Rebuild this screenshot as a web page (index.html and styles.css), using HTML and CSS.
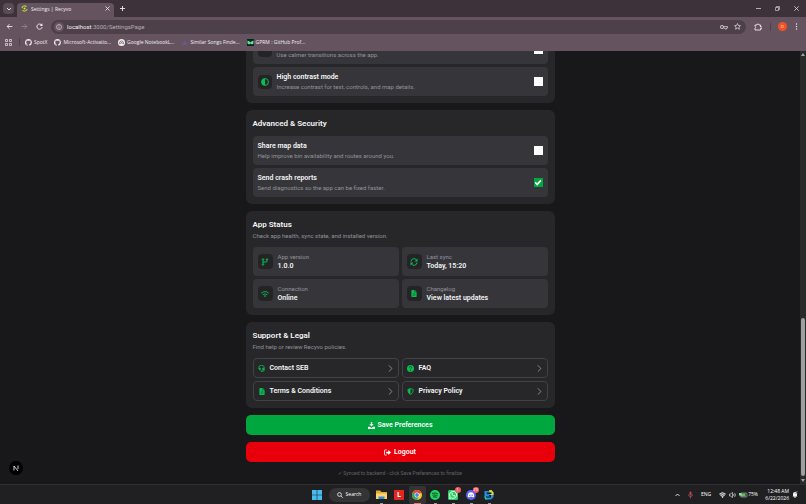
FILE: index.html
```html
<!DOCTYPE html>
<html lang="en">
<head>
    <meta charset="UTF-8">
    <meta name="viewport" content="width=device-width, initial-scale=1.0">
    <title>Settings | Recyvo</title>
    <link rel="stylesheet" href="styles.css">
</head>
<body>
    <!-- shared icons -->
    <svg class="sprite" aria-hidden="true">
        <symbol id="github" viewBox="0 0 16 16"><path d="M8 0a8 8 0 0 0-2.5 15.6c.4.1.5-.2.5-.4v-1.500c-2.200.5-2.700-1-2.700-1-.4-.9-.9-1.200-.9-1.200-.7-.5.1-.5.1-.5.8.1 1.200.8 1.200.8.7 1.300 1.900.9 2.300.7.1-.5.3-.9.5-1.100-1.800-.2-3.600-.9-3.600-4 0-.9.300-1.600.8-2.100-.1-.2-.4-1 .1-2.100 0 0 .7-.2 2.200.8a7.500 7.500 0 0 1 4 0c1.500-1 2.200-.8 2.200-.8.5 1.100.2 1.900.1 2.100.5.600.8 1.300.8 2.100 0 3.100-1.900 3.800-3.700 4 .3.300.6.8.6 1.500v2.200c0 .2.100.5.5.4A8 8 0 0 0 8 0z" fill="#f1ebef"/></symbol>
        <symbol id="chevron" viewBox="0 0 8 12"><path d="M1.500 1l5 5-5 5" fill="none" stroke="currentColor" stroke-width="1.500" stroke-linecap="round" stroke-linejoin="round"/></symbol>
        <symbol id="file" viewBox="0 0 12 16"><path d="M2 0h5v5h5v9a2 2 0 0 1-2 2H2a2 2 0 0 1-2-2V2a2 2 0 0 1 2-2zm6 0l4 4H8z" fill="currentColor"/><path d="M3 9h6M3 12h6" stroke="#1f3427" stroke-width="1"/></symbol>
    </svg>

    <header class="browser">
        <div class="tab-strip">
            <button class="tab-search" aria-label="Search tabs">
                <svg width="6" height="4" viewBox="0 0 6 4"><path d="M1 1l2 2 2-2" fill="none" stroke="#e8dfe5"/></svg>
            </button>
            <div class="tab">
                <svg width="7" height="7" viewBox="0 0 14 14"><path d="M2 6a5 5 0 0 1 9-2M12 8a5 5 0 0 1-9 2" fill="none" stroke="#b4cc2e" stroke-width="2.500"/><circle cx="7" cy="7" r="2" fill="#dfe04c"/><path d="M0 7h4M10 7h4" stroke="#48751f" stroke-width="2"/></svg>
                <span>Settings | Recyvo</span>
                <button class="close" aria-label="Close tab">
                    <svg width="5" height="5" viewBox="0 0 5 5"><path d="M.5.5l4 4m0-4l-4 4" stroke="#f1ebef" stroke-width=".8"/></svg>
                </button>
            </div>
            <button class="new-tab" aria-label="New tab">
                <svg width="5" height="5" viewBox="0 0 5 5"><path d="M2.500 0v5M0 2.500h5" stroke="#f1ebef" stroke-width=".9"/></svg>
            </button>
            <div class="window-buttons">
                <button aria-label="Minimize"><svg width="5" height="5" viewBox="0 0 5 5"><path d="M0 2.500h5" stroke="#e8dfe5" stroke-width=".7"/></svg></button>
                <button aria-label="Restore"><svg width="5" height="5" viewBox="0 0 10 10"><path d="M1 3h6v6H1zM3 3V1h6v6H7" fill="none" stroke="#e8dfe5" stroke-width="1.200"/></svg></button>
                <button aria-label="Close"><svg width="5" height="5" viewBox="0 0 5 5"><path d="M.3.3l4.400 4.400m0-4.400L.3 4.700" stroke="#f1ebef" stroke-width=".7"/></svg></button>
            </div>
        </div>

        <div class="toolbar">
            <button aria-label="Back"><svg width="7" height="7" viewBox="0 0 12 12"><path d="M11 6H2m4-4L2 6l4 4" fill="none" stroke="#f1ebef" stroke-width="1.500"/></svg></button>
            <button aria-label="Forward"><svg width="7" height="7" viewBox="0 0 12 12"><path d="M1 6h9M6 2l4 4-4 4" fill="none" stroke="#958690" stroke-width="1.500"/></svg></button>
            <button aria-label="Reload"><svg width="7" height="7" viewBox="0 0 12 12"><path d="M10 4a4.500 4.500 0 1 0 .5 3" fill="none" stroke="#f1ebef" stroke-width="1.600"/><path d="M11 .5V5H6.500z" fill="#f1ebef"/></svg></button>
            <div class="address">
                <span class="site-info"><svg width="6" height="6" viewBox="0 0 12 12"><circle cx="6" cy="6" r="5" fill="none" stroke="#eee4eb" stroke-width="1.200"/><path d="M6 5v4M6 2.800v1.200" stroke="#eee4eb" stroke-width="1.300"/></svg></span>
                <a href="#" class="url"><b>localhost</b>:3000/SettingsPage</a>
                <svg width="8" height="6" viewBox="0 0 16 10"><circle cx="4" cy="5" r="3.300" fill="none" stroke="#e8dfe5" stroke-width="1.400"/><circle cx="4" cy="5" r="1" fill="#e8dfe5"/><path d="M7 4h8v3h-2v2h-3V7H7" fill="none" stroke="#e8dfe5" stroke-width="1.300"/></svg>
                <svg width="7" height="7" viewBox="0 0 14 14"><path d="M7 1l1.800 4 4.200.4-3.200 2.800 1 4.300L7 10.200l-3.800 2.300 1-4.300L1 5.400 5.200 5z" fill="none" stroke="#f1ebef" stroke-width="1.300"/></svg>
            </div>
            <button aria-label="Extensions"><svg width="8" height="8" viewBox="0 0 16 16"><path d="M2 4h4a2 2 0 1 1 4 0h3v4a2 2 0 1 1 0 3v3H2v-3.500a2 2 0 0 0 0-3.500z" fill="none" stroke="#f1ebef" stroke-width="1.800"/></svg></button>
            <span class="separator"></span>
            <button class="avatar" aria-label="Profile">D</button>
            <button class="more" aria-label="Menu"><svg width="3" height="7" viewBox="0 0 3 7"><circle cx="1.500" cy="1" r=".7" fill="#f1ebef"/><circle cx="1.500" cy="3.500" r=".7" fill="#f1ebef"/><circle cx="1.500" cy="6" r=".7" fill="#f1ebef"/></svg></button>
        </div>

        <nav class="bookmarks">
            <button aria-label="Apps"><svg width="7" height="7" viewBox="0 0 14 14"><path d="M1 1h4v4H1zM9 1h4v4H9zM1 9h4v4H1zM9 9h4v4H9z" fill="none" stroke="#e8dfe5" stroke-width="1.500"/></svg></button>
            <span class="separator"></span>
            <a href="#"><svg width="7" height="7"><use href="#github"/></svg>SpotX</a>
            <a href="#"><svg width="7" height="7"><use href="#github"/></svg>Microsoft-Activatio...</a>
            <a href="#"><svg width="7" height="7" viewBox="0 0 14 14"><circle cx="7" cy="7" r="7" fill="#f1ebef"/><path d="M3 10V8a4 4 0 0 1 8 0v2M5.500 10V8.500a1.500 1.500 0 0 1 3 0V10" fill="none" stroke="#55474f" stroke-width="1.200"/></svg>Google NotebookL...</a>
            <a href="#"><svg width="7" height="7" viewBox="0 0 14 14"><path d="M7 3l6 8H1z" fill="#75568d"/><path d="M7 3L1 11h5z" fill="#526281"/></svg>Similar Songs Finde...</a>
            <a href="#"><svg width="7" height="7" viewBox="0 0 14 14"><path d="M0 0h14v14H0z" fill="#092419"/><path d="M1 3l4 2 2 2 2-2 4-2v6l-3 2-3-2-3 2-3-2z" fill="#62e4a1"/></svg>GPRM : GitHub Prof...</a>
        </nav>
    </header>

    <div class="viewport">
        <main class="page">
            <div class="settings">
                <section class="card">
                    <label class="row">
                        <span class="icon-box"></span>
                        <span class="row-text"><strong></strong><small>Use calmer transitions across the app.</small></span>
                        <input type="checkbox">
                    </label>
                    <label class="row">
                        <span class="icon-box"><svg width="8" height="8" viewBox="0 0 16 16"><circle cx="8" cy="8" r="6.800" fill="none" stroke="currentColor" stroke-width="2"/><path d="M8 1a7 7 0 0 0 0 14z" fill="currentColor"/></svg></span>
                        <span class="row-text"><strong>High contrast mode</strong><small>Increase contrast for text, controls, and map details.</small></span>
                        <input type="checkbox">
                    </label>
                </section>

                <section class="card">
                    <h2 class="spaced">Advanced &amp; Security</h2>
                    <label class="row">
                        <span class="row-text"><strong>Share map data</strong><small>Help improve bin availability and routes around you.</small></span>
                        <input type="checkbox">
                    </label>
                    <label class="row">
                        <span class="row-text"><strong>Send crash reports</strong><small>Send diagnostics so the app can be fixed faster.</small></span>
                        <input type="checkbox" checked>
                    </label>
                </section>

                <section class="card">
                    <h2>App Status</h2>
                    <p>Check app health, sync state, and installed version.</p>
                    <div class="grid">
                        <div class="tile">
                            <span class="icon-box"><svg width="8" height="8" viewBox="0 0 16 16"><g fill="none" stroke="currentColor" stroke-width="2"><circle cx="4" cy="3" r="1.500"/><circle cx="4" cy="13" r="1.500"/><circle cx="12" cy="3" r="1.500"/><path d="M4 4.500v7M12 4.500V6a2 2 0 0 1-2 2H4"/></g></svg></span>
                            <span class="row-text"><small>App version</small><strong>1.0.0</strong></span>
                        </div>
                        <div class="tile">
                            <span class="icon-box"><svg width="8" height="8" viewBox="0 0 16 16"><path d="M2 7a6 6 0 0 1 11-3M14 9a6 6 0 0 1-11 3" fill="none" stroke="currentColor" stroke-width="2"/><path d="M15 1v6H9zM1 15V9h6z" fill="currentColor"/></svg></span>
                            <span class="row-text"><small>Last sync</small><strong>Today, 15:20</strong></span>
                        </div>
                        <div class="tile">
                            <span class="icon-box"><svg width="8" height="8" viewBox="0 0 16 16"><path d="M1 6a10.500 10.500 0 0 1 14 0M4 9.200a6 6 0 0 1 8 0" fill="none" stroke="currentColor" stroke-width="1.800" stroke-linecap="round"/><circle cx="8" cy="12" r="1.700" fill="currentColor"/></svg></span>
                            <span class="row-text"><small>Connection</small><strong>Online</strong></span>
                        </div>
                        <div class="tile">
                            <span class="icon-box"><svg width="6" height="7"><use href="#file"/></svg></span>
                            <span class="row-text"><small>Changelog</small><strong>View latest updates</strong></span>
                        </div>
                    </div>
                </section>

                <section class="card">
                    <h2>Support &amp; Legal</h2>
                    <p>Find help or review Recyvo policies.</p>
                    <div class="grid">
                        <a class="link" href="#"><span class="link-icon"><svg width="7" height="7" viewBox="0 0 16 16"><path d="M1.500 9V7a6.500 6.500 0 0 1 13 0v4a3 3 0 0 1-3 3H8" fill="none" stroke="currentColor" stroke-width="1.800"/><path d="M3 6h3v6H4.500A2.500 2.500 0 0 1 2 9.500zM10 6h3l1 3.500a2.500 2.500 0 0 1-2.500 2.500H10zM6.500 12.500H10v3H6.500z" fill="currentColor"/></svg></span>Contact SEB<svg class="arrow" width="5" height="7"><use href="#chevron"/></svg></a>
                        <a class="link" href="#"><span class="link-icon"><svg width="7" height="7" viewBox="0 0 16 16"><circle cx="8" cy="8" r="8" fill="currentColor"/><path d="M5.500 6a2.500 2.500 0 1 1 3.500 2.200L8 9v1M8 11.500v2" fill="none" stroke="#1f3427" stroke-width="1.700"/></svg></span>FAQ<svg class="arrow" width="5" height="7"><use href="#chevron"/></svg></a>
                        <a class="link" href="#"><span class="link-icon"><svg width="6" height="7"><use href="#file"/></svg></span>Terms &amp; Conditions<svg class="arrow" width="5" height="7"><use href="#chevron"/></svg></a>
                        <a class="link" href="#"><span class="link-icon"><svg width="7" height="7" viewBox="0 0 16 16"><path d="M8 1l6 2.500C14 9 12 13 8 15 4 13 2 9 2 3.500z" fill="none" stroke="currentColor" stroke-width="2"/><path d="M8 1v14C4 13 2 9 2 3.500z" fill="currentColor"/></svg></span>Privacy Policy<svg class="arrow" width="5" height="7"><use href="#chevron"/></svg></a>
                    </div>
                </section>

                <button class="action save"><svg width="7" height="7" viewBox="0 0 16 16"><path d="M6.500 0h3v5H13L8 10 3 5h3.500zM0 11h4l4 2.500 4-2.500h4v5H0z" fill="#fff"/></svg>Save Preferences</button>
                <button class="action logout"><svg width="7" height="7" viewBox="0 0 16 16"><path d="M6 2H3a2 2 0 0 0-2 2v8a2 2 0 0 0 2 2h3" fill="none" stroke="#fff" stroke-width="2"/><path d="M5 6h5V2.500L16 8l-6 5.500V10H5z" fill="#fff"/></svg>Logout</button>
                <p class="note">✓ Synced to backend - click Save Preferences to finalize</p>
            </div>
            <div class="dev-badge"><svg width="8" height="8" viewBox="0 0 16 16"><path d="M4 13V4l8 10M12 3v7" fill="none" stroke="#fff" stroke-width="1.600"/></svg></div>
        </main>
        <div class="scrollbar" aria-hidden="true">
            <svg width="4" height="3" viewBox="0 0 4 3"><path d="M0 3l2-3 2 3z" fill="#a3a3a3"/></svg>
            <div class="track"><div class="thumb"></div></div>
            <svg width="4" height="3" viewBox="0 0 4 3"><path d="M0 0l2 3 2-3z" fill="#a3a3a3"/></svg>
        </div>
    </div>

    <footer class="taskbar">
        <div class="apps">
            <button aria-label="Start"><svg width="10" height="10" viewBox="0 0 10 10"><path d="M0 0h4.700v4.700H0zM5.300 0H10v4.700H5.300zM0 5.300h4.700V10H0zM5.300 5.300H10V10H5.300z" fill="#43bdf2"/></svg></button>
            <button class="search"><svg width="6" height="6" viewBox="0 0 12 12"><circle cx="5" cy="5" r="3.800" fill="none" stroke="#fff" stroke-width="1.500"/><path d="M8 8l3.500 3.500" stroke="#fff" stroke-width="1.500"/></svg>Search</button>
            <button class="running" aria-label="Files"><svg width="11" height="10" viewBox="0 0 22 20"><path d="M0 1h8l3 3h11v14H0z" fill="#e7a82c"/><path d="M0 7h22v11H0z" fill="#ffd768"/><path d="M5 13h12v5H5z" fill="#2d8bd7"/></svg></button>
            <button aria-label="L"><span class="l-app">L</span></button>
            <button class="running active" aria-label="Chrome"><svg width="10" height="10" viewBox="0 0 20 20"><circle cx="10" cy="10" r="10" fill="#fbc62d"/><path d="M10 10L1.300 5a10 10 0 0 1 17.400 0z" fill="#ea4335"/><path d="M10 10L1.300 5A10 10 0 0 0 10 20l4-7z" fill="#34a853"/><circle cx="10" cy="10" r="5" fill="#fff"/><circle cx="10" cy="10" r="3.800" fill="#4285f4"/></svg></button>
            <button class="running" aria-label="Spotify"><svg width="10" height="10" viewBox="0 0 20 20"><circle cx="10" cy="10" r="10" fill="#1ed760"/><path d="M4 7c4-1.500 9-1 12 1M5 10.500c3.500-1 7-.5 10 1M6 14c3-.8 5-.5 8 .8" fill="none" stroke="#15351f" stroke-width="1.800"/></svg></button>
            <button class="running" aria-label="WhatsApp"><svg width="10" height="10" viewBox="0 0 20 20"><rect width="20" height="20" rx="3" fill="#2fd066"/><path d="M3 17l1-4a7 7 0 1 1 3 3z" fill="none" stroke="#fff" stroke-width="1.800"/><path d="M7 6c0 4 3 7 7 7l.5-2-2.500-1-1 1-2.500-2.500 1-1L8.500 5z" fill="#fff"/></svg><span class="badge">1</span></button>
            <button class="running" aria-label="Discord"><svg width="10" height="10" viewBox="0 0 20 20"><circle cx="10" cy="10" r="10" fill="#5865f2"/><path d="M6 5.500a10 10 0 0 1 8 0c2 3 2.500 5 2.300 8L13.500 15l-1-1.500h-5l-1 1.500-2.800-1.500C3.500 10.500 4 8.500 6 5.500z" fill="#fff"/><circle cx="7.800" cy="10.500" r="1.300" fill="#5865f2"/><circle cx="12.200" cy="10.500" r="1.300" fill="#5865f2"/></svg><span class="badge">29</span></button>
            <button class="running" aria-label="Code editor"><svg width="10" height="10" viewBox="0 0 20 20"><path d="M1 2h14l4 4v8l-5 5H4l-3-4z" fill="#2292e8"/><path d="M10 0h5l4 5v5h-6z" fill="#e8d735"/><path d="M1 12l6 7H2z" fill="#2ed07b"/><path d="M4 5h11v3H7v2h7v5H4v-2h8" fill="#101820"/></svg></button>
        </div>
        <div class="tray">
            <svg width="5" height="4" viewBox="0 0 10 8"><path d="M1 6l4-4 4 4" fill="none" stroke="#fff" stroke-width="1.600"/></svg>
            <svg class="mic" width="5" height="8" viewBox="0 0 10 16"><rect x="3" y="1" width="4" height="8" rx="2" fill="#b54b4c"/><path d="M1 7a4 4 0 0 0 8 0M5 11v4" fill="none" stroke="#c36262" stroke-width="1.300"/></svg>
            <span class="lang">ENG</span>
            <svg width="7" height="6" viewBox="0 0 14 12"><path d="M0 4a10 10 0 0 1 14 0l-7 8z" fill="#777"/><path d="M1 4a9 9 0 0 1 12 0M3 7a6 6 0 0 1 8 0" fill="none" stroke="#fff" stroke-width="1.300"/><circle cx="7" cy="10" r="1.500" fill="#fff"/></svg>
            <svg width="7" height="6" viewBox="0 0 14 12"><path d="M1 4h2l4-3v10L3 8H1zM9 4q2 2 0 4M11 2q4 4 0 8" fill="none" stroke="#e5e5e5" stroke-width="1.300"/></svg>
            <span class="battery"><svg width="9" height="6" viewBox="0 0 18 12"><rect x="3" y="2" width="13" height="8" rx="2" fill="#252525" stroke="#ddd"/><path d="M4 3h9v6H4z" fill="#67bd6c"/><path d="M0 2h5v5H0z" fill="#9bdc9e"/></svg>75%</span>
            <time class="clock">12:48 AM<br>6/22/2026</time>
            <svg width="6" height="7" viewBox="0 0 12 14"><path d="M2 10V6a4 4 0 0 1 8 0v4l1 1H1z" fill="#f5f5f5"/><path d="M4 12h4" stroke="#fff" stroke-width="2"/><path d="M7 1h4L7 5h4" fill="none" stroke="#999"/></svg>
        </div>
    </footer>
</body>
</html>
```
FILE: styles.css
```css
* {
    box-sizing: border-box;
}

body {
    margin: 0;
    height: 100vh;
    display: flex;
    flex-direction: column;
    overflow: hidden;
    background: #18181b;
    color: #f4f4f5;
    font-family: Roboto, "Noto Sans", sans-serif;
    font-size: 6px;
    line-height: 8px;
}

button {
    display: flex;
    align-items: center;
    justify-content: center;
    padding: 0;
    border: 0;
    background: none;
    color: inherit;
    font: inherit;
}

a {
    color: inherit;
    text-decoration: none;
}

svg {
    flex: none;
}

.sprite {
    position: absolute;
    width: 0;
    height: 0;
}

/* browser */
.browser {
    background: #65545f;
    color: #f1ebef;
    font-family: "Open Sans", "Noto Sans", sans-serif;
    font-size: 5px;
}

.tab-strip {
    display: flex;
    align-items: center;
    height: 17px;
    padding-left: 3px;
    background: #3d323a;
}

.tab-search {
    width: 11px;
    height: 11px;
    border-radius: 4px;
    background: #5a4b55;
}

.tab {
    display: flex;
    align-items: center;
    align-self: flex-end;
    gap: 3px;
    width: 97px;
    height: 14px;
    margin-left: 3px;
    padding: 0 4px 3px;
    border-radius: 4px 4px 0 0;
    background: #65545f;
}

.tab .close {
    margin-left: auto;
}

.new-tab {
    width: 16px;
}

.window-buttons {
    display: flex;
    gap: 14px;
    margin-left: auto;
    padding-right: 7px;
}

.toolbar {
    display: flex;
    align-items: center;
    gap: 8px;
    height: 19px;
    padding: 0 8px 0 6px;
}

.address {
    flex: 1;
    display: flex;
    align-items: center;
    gap: 6px;
    height: 14px;
    padding: 0 5px 0 3px;
    border-radius: 7px;
    background: #4d4049;
}

.site-info {
    display: flex;
    align-items: center;
    justify-content: center;
    width: 10px;
    height: 10px;
    border-radius: 50%;
    background: #65545f;
}

.url {
    flex: 1;
    margin-left: -3px;
    color: #b9abb4;
    font-size: 6px;
    font-family: Roboto, "Noto Sans", sans-serif;
}

.url b {
    color: #f7f1f5;
    font-weight: 400;
}

.separator {
    width: 1px;
    height: 8px;
    background: #4d4049;
}

.toolbar .separator {
    margin-right: -1px;
}

.avatar {
    width: 9px;
    height: 9px;
    border-radius: 50%;
    background: #f05225;
    font-size: 4px;
}

.bookmarks {
    display: flex;
    align-items: center;
    gap: 7px;
    height: 15px;
    padding: 0 5px 3px;
}

.bookmarks .separator {
    margin-right: -2px;
}

.bookmarks a {
    display: flex;
    align-items: center;
    gap: 2px;
}

/* settings page */
.viewport {
    flex: 1;
    display: flex;
    min-height: 0;
}

.page {
    position: relative;
    flex: 1;
    display: flex;
    align-items: flex-end;
    justify-content: center;
    overflow: hidden;
}

.settings {
    display: flex;
    flex-direction: column;
    gap: 7px;
    width: 100%;
    max-width: 309px;
    padding-bottom: 7px;
}

.card {
    display: flex;
    flex-direction: column;
    gap: 3px;
    padding: 7px;
    border-radius: 6px;
    background: #27272a;
}

h2 {
    margin: 0;
    font-size: 8px;
    line-height: 13px;
    font-weight: 600;
}

h2.spaced {
    margin-bottom: 3px;
}

p {
    margin: 0;
}

.card p {
    margin: -3px 0 3px;
    line-height: 10px;
    color: #92929b;
}

.row,
.tile {
    display: flex;
    align-items: center;
    gap: 5px;
    height: 29px;
    padding: 0 5px;
    border-radius: 4px;
    background: #36363a;
}

.row-text {
    display: flex;
    flex-direction: column;
    flex: 1;
}

.row-text strong {
    min-height: 10px;
    font-size: 7px;
    line-height: 10px;
    font-weight: 600;
}

.row-text small {
    font-size: 6px;
    line-height: 9px;
    color: #92929b;
}

.icon-box {
    display: flex;
    align-items: center;
    justify-content: center;
    width: 14px;
    height: 14px;
    border-radius: 4px;
    background: #242427;
    color: #09bd50;
}

.tile .icon-box {
    width: 15px;
    height: 15px;
}

input[type="checkbox"] {
    appearance: none;
    display: grid;
    place-items: center;
    width: 9px;
    height: 9px;
    margin: 0;
    background: #fff;
}

input[type="checkbox"]:checked {
    background: #00a63e;
}

input[type="checkbox"]:checked::before {
    content: "";
    width: 7px;
    height: 7px;
    background: #fff;
    clip-path: polygon(0 55%, 18% 38%, 38% 60%, 82% 10%, 100% 27%, 38% 95%);
}

.grid {
    display: grid;
    grid-template-columns: 1fr 1fr;
    gap: 3px;
}

.link {
    display: flex;
    align-items: center;
    gap: 4px;
    height: 20px;
    padding: 0 5px 0 4px;
    border: 1px solid #414146;
    border-radius: 4px;
    font-size: 7px;
    font-weight: 600;
}

.link-icon {
    display: flex;
    justify-content: center;
    width: 8px;
    color: #09bd50;
}

.arrow {
    margin-left: auto;
    color: #92929b;
}

.action {
    gap: 3px;
    height: 20px;
    border-radius: 5px;
    color: #fff;
    font-size: 7px;
    font-weight: 600;
}

.save {
    background: #00a63e;
}

.logout {
    background: #e7000b;
}

.note {
    color: #62626b;
    font-size: 5px;
    text-align: center;
}

.dev-badge {
    position: absolute;
    left: 9px;
    bottom: 9px;
    display: flex;
    align-items: center;
    justify-content: center;
    width: 14px;
    height: 14px;
    border-radius: 50%;
    background: #000;
}

.scrollbar {
    display: flex;
    flex-direction: column;
    align-items: center;
    gap: 3px;
    width: 6px;
    padding: 2px 0;
    background: #2a2a2a;
}

.track {
    flex: 1;
    display: flex;
    align-items: flex-end;
}

.thumb {
    width: 4px;
    height: 38%;
    border-radius: 2px;
    background: #9f9f9f;
}

/* taskbar */
.taskbar {
    display: grid;
    grid-template-columns: 1fr auto 1fr;
    align-items: center;
    height: 20px;
    border-top: 1px solid #303032;
    background: #202022;
    color: #fff;
    font-family: "Open Sans", "Noto Sans", sans-serif;
    font-size: 5px;
    line-height: 7px;
}

.apps {
    grid-column: 2;
    display: flex;
    align-items: center;
    gap: 1px;
}

.apps button {
    position: relative;
    width: 17px;
    height: 18px;
}

.apps .search {
    gap: 3px;
    width: 41px;
    height: 14px;
    margin: 0 2px;
    border-radius: 7px;
    background: #343436;
}

.apps .active {
    border-radius: 2px;
    background: #343436;
}

.running::after {
    content: "";
    position: absolute;
    bottom: 0;
    left: 7px;
    width: 3px;
    height: 1px;
    background: #9b9b9b;
}

.running.active::after {
    left: 5px;
    width: 7px;
    background: #ef7474;
}

.l-app {
    width: 10px;
    height: 10px;
    background: #e22620;
    font-size: 7px;
    line-height: 10px;
    font-weight: 700;
}

.badge {
    position: absolute;
    top: 1px;
    right: 1px;
    width: 6px;
    height: 6px;
    border-radius: 50%;
    background: #ee5b62;
    font-size: 4px;
    line-height: 6px;
}

.tray {
    display: flex;
    align-items: center;
    justify-content: flex-end;
    gap: 3px;
    padding-right: 8px;
}

.mic {
    margin: 0 5px;
}

.lang {
    margin-right: 5px;
}

.battery {
    display: flex;
    align-items: center;
}

.clock {
    width: 28px;
    text-align: right;
}
```
